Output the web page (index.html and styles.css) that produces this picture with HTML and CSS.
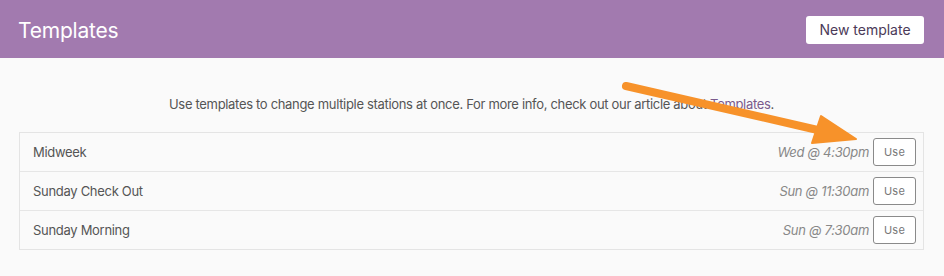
FILE: index.html
```html
<!DOCTYPE html>
<html>
<head>
<meta charset="utf-8">
<link rel="stylesheet" href="styles.css">
</head>
<body>
<header class="topbar">
  <h1 class="title">Templates</h1>
  <button class="new-btn">New template</button>
</header>
<main class="content">
  <p class="intro">Use templates to change multiple stations at once. For more info, check out our article about <a class="link" href="#">Templates</a>.</p>
  <div class="list">
    <div class="row"><span class="name">Midweek</span><span class="when">Wed @ 4:30pm</span><button class="use">Use</button></div>
    <div class="row"><span class="name">Sunday Check Out</span><span class="when">Sun @ 11:30am</span><button class="use">Use</button></div>
    <div class="row"><span class="name">Sunday Morning</span><span class="when">Sun @ 7:30am</span><button class="use">Use</button></div>
  </div>
</main>
<svg class="arrow" width="944" height="276" viewBox="0 0 944 276">
  <line x1="626" y1="86" x2="822" y2="131" stroke="#f7922a" stroke-width="8" stroke-linecap="round"/>
  <polygon points="821,116 812,143 856,139" fill="#f7922a" stroke="#f7922a" stroke-width="2" stroke-linejoin="round"/>
</svg>
</body>
</html>
```
FILE: styles.css
```css
* { box-sizing: border-box; }
html, body { margin: 0; padding: 0; }
body {
  background: #fafafa;
  font-family: Inter, "Noto Sans", sans-serif;
  color: #555;
  width: 944px;
  height: 276px;
  overflow: hidden;
  position: relative;
}
.topbar {
  height: 58px;
  background: #a27aaf;
  display: flex;
  align-items: center;
  justify-content: space-between;
  padding: 0 20px 0 18px;
}
.title {
  margin: 3px 0 0;
  font-weight: 400;
  font-size: 21px;
  color: #fff;
  letter-spacing: -0.2px;
}
.new-btn {
  height: 28px;
  width: 118px;
  border: none;
  background: #fff;
  border-radius: 3px;
  font-family: inherit;
  font-size: 14px;
  color: #4b3a58;
  padding: 0;
  margin-top: 1px;
}
.content {
  padding: 0 20px 0 19px;
}
.intro {
  margin: 0;
  height: 74px;
  padding-top: 38px;
  text-align: center;
  font-size: 13px;
  letter-spacing: -0.32px;
  color: #555;
}
.link { color: #7a5a8c; text-decoration: none; }
.list {
  border: 1px solid #e4e4e4;
  background: #fafafa;
}
.row {
  height: 39px;
  display: flex;
  align-items: center;
  padding: 0 7px 0 13px;
  border-top: 1px solid #e6e6e6;
  font-size: 13px;
  letter-spacing: -0.3px;
}
.row:first-child { border-top: none; height: 38px; }
.name { flex: 1; color: #555; }
.when { font-style: italic; color: #888; margin-right: 4px; }
.use {
  width: 43px;
  height: 28px;
  border: 1px solid #8a8a8a;
  border-radius: 3px;
  background: #fff;
  font-family: inherit;
  font-size: 11px;
  letter-spacing: 0.2px;
  color: #777;
  padding: 0;
}
.arrow {
  position: absolute;
  left: 0;
  top: 0;
  pointer-events: none;
}
```
